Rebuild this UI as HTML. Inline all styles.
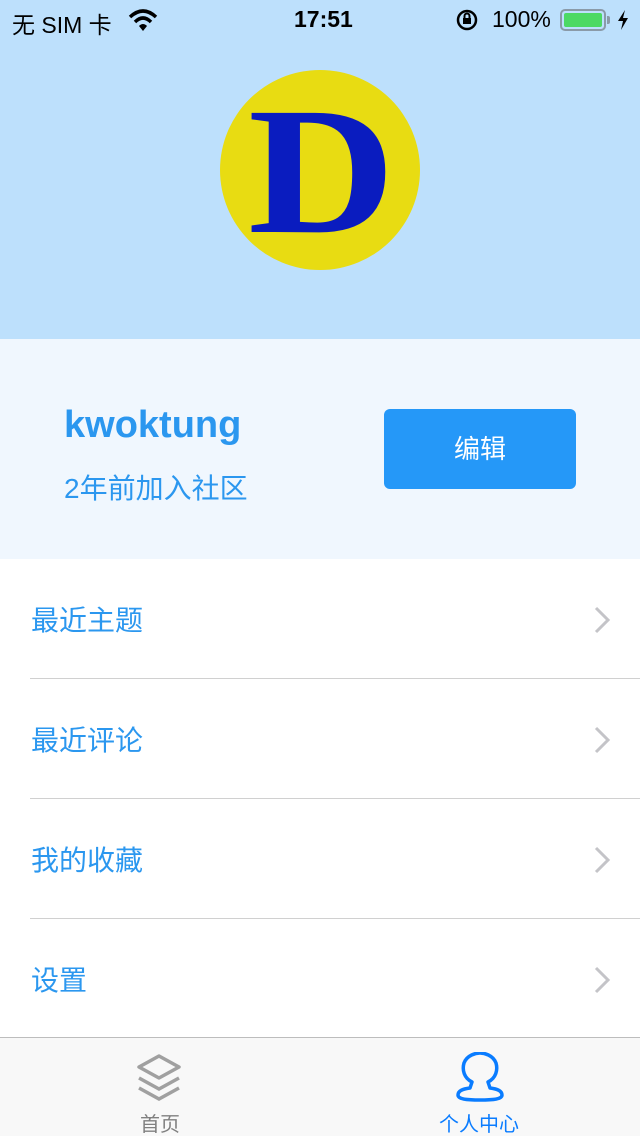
<!DOCTYPE html>
<html><head><meta charset="utf-8"><style>
*{margin:0;padding:0;box-sizing:border-box}
body{width:640px;height:1136px;overflow:hidden;background:#fff;font-family:"Liberation Sans","Noto Sans CJK SC",sans-serif;position:relative}
.hdr{position:absolute;left:0;top:0;width:640px;height:339px;background:#bde0fc}
.sb{position:absolute;top:0;left:0;width:640px;height:40px;font-size:23px;color:#000}
.av{position:absolute;left:220px;top:70px;width:200px;height:200px;border-radius:50%;background:#e8dc12;overflow:hidden}
.av span{position:absolute;left:28px;top:-7px;font-family:"Liberation Serif",serif;font-weight:bold;font-size:182px;color:#0a1cbf;line-height:1.2;transform:scaleX(1.12);transform-origin:left top}
.prof{position:absolute;top:339px;left:0;width:640px;height:220px;background:#f0f7fe}
.name{position:absolute;left:64px;top:404px;font-size:38px;font-weight:bold;color:#2b97ef}
.sub{position:absolute;left:64px;top:467px;font-size:28px;color:#2b97ef}
.btn{position:absolute;left:384px;top:409px;width:192px;height:80px;background:#2598f8;border-radius:6px;color:#fff;font-size:26px;text-align:center;line-height:80px}
.row{position:absolute;left:0;width:640px;height:120px}
.row .t{position:absolute;left:31px;top:40px;font-size:28px;color:#2b97ef}
.row .l{position:absolute;left:30px;right:0;bottom:0;height:1px;background:#d0d0d0}
.row svg{position:absolute;left:592px;top:46px}
.tab{position:absolute;top:1037px;left:0;width:640px;height:99px;background:#f8f8f8;border-top:1px solid #bdbdbd}
</style></head><body>
<div class="hdr"></div>
<div class="sb">
<span style="position:absolute;left:12px;top:6px">无 SIM 卡</span>
<svg style="position:absolute;left:128px;top:8px" width="30" height="24" viewBox="0 0 30 24"><path d="M2 9 Q15 -3 28 9" stroke="#000" stroke-width="3.5" fill="none"/><path d="M7 14 Q15 6 23 14" stroke="#000" stroke-width="3.5" fill="none"/><path d="M11 18 L15 23 L19 18 Q15 14 11 18Z" fill="#000"/></svg>
<span style="position:absolute;left:294px;top:6px;font-weight:bold">17:51</span>
<svg style="position:absolute;left:455px;top:8px" width="24" height="24" viewBox="0 0 24 24"><circle cx="12" cy="12" r="9" stroke="#000" stroke-width="2.5" fill="none"/><rect x="8" y="10" width="8" height="6" fill="#000"/><path d="M9.5 10 V8 a2.5 2.5 0 0 1 5 0 V10" stroke="#000" stroke-width="2" fill="none"/></svg>
<span style="position:absolute;left:492px;top:6px">100%</span>
<div style="position:absolute;left:560px;top:9px;width:46px;height:22px;border:2px solid #8a9aa8;border-radius:5px;padding:2px"><div style="width:100%;height:100%;background:#4cd964;border-radius:2px"></div></div>
<div style="position:absolute;left:607px;top:16px;width:3px;height:8px;background:#8a9aa8;border-radius:0 2px 2px 0"></div>
<svg style="position:absolute;left:617px;top:10px" width="12" height="20" viewBox="0 0 12 20"><path d="M8 0 L1 11 H6 L4 20 L11 8 H6 Z" fill="#000"/></svg>
</div>
<div class="av"><span>D</span></div>
<div class="prof"></div>
<div class="name">kwoktung</div>
<div class="sub">2年前加入社区</div>
<div class="btn">编辑</div>
<div class="row" style="top:559px"><span class="t">最近主题</span><svg width="20" height="30" viewBox="0 0 20 30"><path d="M4 3 L16 15 L4 27" stroke="#c4c4c8" stroke-width="3" fill="none"/></svg><div class="l"></div></div>
<div class="row" style="top:679px"><span class="t">最近评论</span><svg width="20" height="30" viewBox="0 0 20 30"><path d="M4 3 L16 15 L4 27" stroke="#c4c4c8" stroke-width="3" fill="none"/></svg><div class="l"></div></div>
<div class="row" style="top:799px"><span class="t">我的收藏</span><svg width="20" height="30" viewBox="0 0 20 30"><path d="M4 3 L16 15 L4 27" stroke="#c4c4c8" stroke-width="3" fill="none"/></svg><div class="l"></div></div>
<div class="row" style="top:919px"><span class="t">设置</span><svg width="20" height="30" viewBox="0 0 20 30"><path d="M4 3 L16 15 L4 27" stroke="#c4c4c8" stroke-width="3" fill="none"/></svg></div>
<div class="tab">
<svg style="position:absolute;left:134px;top:14px" width="50" height="50" viewBox="0 0 50 50"><path d="M25 4 L45 15 L25 26 L5 15 Z" stroke="#a0a0a0" stroke-width="3.5" fill="none" stroke-linejoin="round"/><path d="M5 26 L25 37 L45 26" stroke="#a0a0a0" stroke-width="3.5" fill="none"/><path d="M5 36 L25 47 L45 36" stroke="#a0a0a0" stroke-width="3.5" fill="none"/></svg>
<span style="position:absolute;left:140px;top:70px;font-size:20px;color:#808080">首页</span>
<svg style="position:absolute;left:454px;top:14px" width="52" height="50" viewBox="0 0 52 50"><path d="M18 30 C10 26 8 18 10 11 C13 3 22 1 26 1 C30 1 39 3 42 11 C44 18 42 26 34 30 L36 36 C44 37 48 39 48 43 C48 47 40 48 26 48 C12 48 4 47 4 43 C4 39 8 37 16 36 Z" stroke="#0a7cff" stroke-width="3.5" fill="none" stroke-linejoin="round"/></svg>
<span style="position:absolute;left:439px;top:70px;font-size:20px;color:#0a7cff">个人中心</span>
</div>
</body></html>
